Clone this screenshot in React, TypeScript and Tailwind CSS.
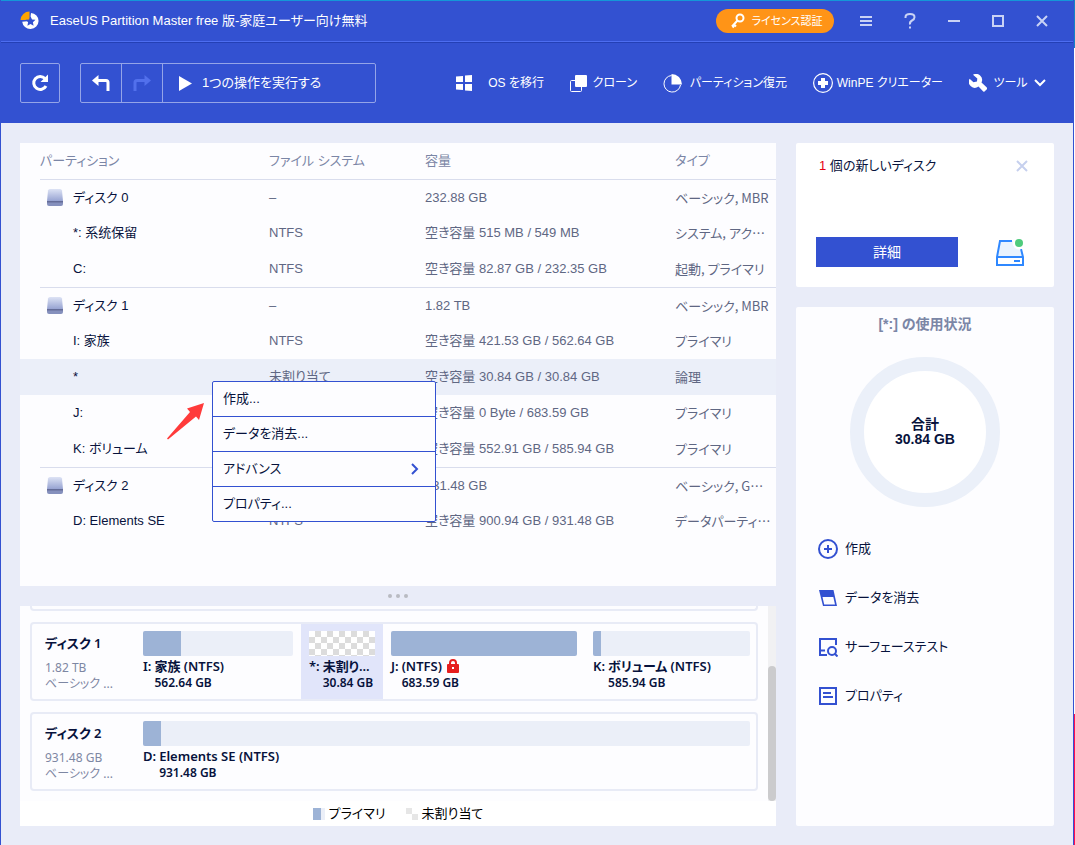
import type { ReactNode } from "react";

const rows = [
  { name: "ディスク 0", disk: true, fs: "–", size: "232.88 GB", type: "ベーシック, MBR" },
  { name: "*: 系统保留", fs: "NTFS", size: "空き容量 515 MB / 549 MB", type: "システム, アク…" },
  { name: "C:", fs: "NTFS", size: "空き容量 82.87 GB / 232.35 GB", type: "起動, プライマリ" },
  { name: "ディスク 1", disk: true, fs: "–", size: "1.82 TB", type: "ベーシック, MBR" },
  { name: "I: 家族", fs: "NTFS", size: "空き容量 421.53 GB / 562.64 GB", type: "プライマリ" },
  { name: "*", selected: true, fs: "未割り当て", size: "空き容量 30.84 GB / 30.84 GB", type: "論理" },
  { name: "J:", fs: "NTFS", size: "空き容量 0 Byte / 683.59 GB", type: "プライマリ" },
  { name: "K: ボリューム", fs: "NTFS", size: "空き容量 552.91 GB / 585.94 GB", type: "プライマリ" },
  { name: "ディスク 2", disk: true, fs: "–", size: "931.48 GB", type: "ベーシック, G…" },
  { name: "D: Elements SE", fs: "NTFS", size: "空き容量 900.94 GB / 931.48 GB", type: "データパーティ…" },
];

const menuItems = [
  { label: "作成..." },
  { label: "データを消去..." },
  { label: "アドバンス", sub: true },
  { label: "プロパティ..." },
];

const tools = [
  { label: "OS を移行", width: "w-[88px]", icon: <WindowsIcon /> },
  { label: "クローン", width: "w-[67px]", icon: <CloneIcon /> },
  { label: "パーティション復元", width: "w-[124px]", icon: <PieIcon /> },
  { label: "WinPE クリエーター", width: "w-[130px]", icon: <PlusCircleIcon /> },
];

const actions = [
  { label: "作成", icon: <CreateIcon /> },
  { label: "データを消去", icon: <WipeIcon /> },
  { label: "サーフェーステスト", icon: <SurfaceIcon /> },
  { label: "プロパティ", icon: <PropertyIcon /> },
];

function LogoIcon() {
  return (
    <svg width="20" height="20" viewBox="0 0 20 20">
      <path d="M11 2a8.200 8 0 1 1-8.800 8.800L10 10z" fill="#fff" />
      <path d="M9.500 0.500V9H0.500A9 9 0 0 1 9.500 0.500z" fill="#ffa500" />
      <path
        d="M10.500 5.200l1.500 3.200 3.500.4-2.600 2.400.7 3.500-3.100-1.700-3.100 1.700.7-3.500L5.600 8.800l3.500-.4z"
        fill="#3351d1"
      />
    </svg>
  );
}

function KeyIcon() {
  return (
    <svg width="14" height="16" viewBox="0 0 14 16" fill="none" stroke="#fff" strokeWidth="2">
      <circle cx="9" cy="5" r="3.500" />
      <path d="M6.500 7.500L1 13.500M3 11.500l2 2M1.500 13l1.500 1.500" />
    </svg>
  );
}

function WindowsIcon() {
  return (
    <svg width="16" height="16" viewBox="0 0 16 16" fill="#fff">
      <path d="M0 1.500L7 1v6H0zM9 .5L16 0v7H9zM0 9h7v6l-7-.5zM9 9h7v7l-7-.5z" />
    </svg>
  );
}

function CloneIcon() {
  return (
    <svg width="17" height="17" viewBox="0 0 17 17">
      <path d="M5 5.500H1.500a1 1 0 0 0-1 1V15.500a1 1 0 0 0 1 1H10.500a1 1 0 0 0 1-1V12" fill="none" stroke="#fff" />
      <rect x="5" y="0" width="12" height="12" rx="1" fill="#fff" />
    </svg>
  );
}

function PieIcon() {
  return (
    <svg width="19" height="19" viewBox="0 0 19 19">
      <path d="M8.500 1.500a8.300 8.300 0 1 0 9 9.500" fill="none" stroke="#fff" />
      <path d="M8.500 0A10.500 10.500 0 0 1 19 10.500H8.500z" fill="#fff" />
    </svg>
  );
}

function PlusCircleIcon() {
  return (
    <svg width="20" height="20" viewBox="0 0 20 20">
      <circle cx="10" cy="10" r="9.400" fill="none" stroke="#fff" strokeWidth="1.200" />
      <path d="M10 5v10M5 10h10" stroke="#fff" strokeWidth="4" />
    </svg>
  );
}

function WrenchIcon() {
  return (
    <svg width="18" height="18" viewBox="0 0 18 18" fill="#fff">
      <path d="M4 .8A6 6 0 0 1 12.500 8.500L17.300 13a1.800 1.800 0 0 1 0 2.800l-1 1a1.800 1.800 0 0 1-2.800 0L9.500 12.500A6 6 0 0 1 .6 4.800L4.500 8.200 8 7.500 8.300 4.500z" />
    </svg>
  );
}

function DiskIcon() {
  return (
    <svg width="16" height="17" viewBox="0 0 16 17">
      <defs>
        <linearGradient id="diskTop" x1="0" y1="0" x2="0" y2="1">
          <stop offset="0" stopColor="#dde3f5" />
          <stop offset="1" stopColor="#97a3d2" />
        </linearGradient>
      </defs>
      <path d="M1 1.500Q1.200 0 3 0H13Q14.800 0 15 1.500L16 12H0z" fill="url(#diskTop)" />
      <path d="M0 12h16v3q0 2-2 2H2q-2 0-2-2z" fill="#8590bd" />
      <path d="M0 12h16v1.500H0z" fill="#646c98" />
    </svg>
  );
}

function NewDiskIcon() {
  return (
    <svg width="30" height="30" viewBox="0 0 30 30">
      <path d="M5 4h20l3 15H2z" fill="#e9f3fe" />
      <path d="M17 4H5L2 20v8h26v-8L26 12M2 20h26" fill="none" stroke="#2f88ff" strokeWidth="2" />
      <path d="M19 24h6" stroke="#2f88ff" strokeWidth="2" />
      <circle cx="24" cy="6" r="6.500" fill="#fff" />
      <circle cx="24" cy="6" r="4" fill="#4fcb7c" />
    </svg>
  );
}

function CreateIcon() {
  return (
    <svg width="20" height="20" viewBox="0 0 20 20" fill="none" stroke="#3351d1" strokeWidth="2">
      <circle cx="10" cy="10" r="9" />
      <path d="M10 6v8M6 10h8" />
    </svg>
  );
}

function WipeIcon() {
  return (
    <svg width="20" height="20" viewBox="0 0 20 20">
      <path d="M1 2h14.500L19 18H5zM4.500 9L6.200 16.500H17L15.300 9z" fill="#3351d1" fillRule="evenodd" />
    </svg>
  );
}

function SurfaceIcon() {
  return (
    <svg width="20" height="20" viewBox="0 0 20 20" fill="none" stroke="#3351d1" strokeWidth="2">
      <path d="M18 8V2H2v16h7M2 13.500h5" />
      <circle cx="14" cy="14" r="4" />
      <path d="M16.500 16.500l3 3" />
    </svg>
  );
}

function PropertyIcon() {
  return (
    <svg width="20" height="20" viewBox="0 0 20 20" fill="none" stroke="#3351d1" strokeWidth="2">
      <path d="M2 2h16v16H2zM5 7h8M5 11h10" />
    </svg>
  );
}

function LockIcon() {
  return (
    <svg width="12" height="14" viewBox="0 0 12 14">
      <path d="M3 7V4a3 3 0 0 1 6 0v3" fill="none" stroke="#e61e1e" strokeWidth="2" />
      <rect y="5" width="12" height="9" rx="1" fill="#e61e1e" />
      <rect x="5" y="8" width="2" height="2" fill="#fff" />
    </svg>
  );
}

function WindowButton({ label, children }: { label: string; children: ReactNode }) {
  return (
    <button aria-label={label} className="flex h-10 w-11 shrink-0 items-center justify-center">
      <svg width="14" height="16" viewBox="0 0 14 16" fill="none" stroke="#c9d2f5" strokeWidth="2">
        {children}
      </svg>
    </button>
  );
}

function TitleBar() {
  return (
    <div className="flex h-10 items-center pr-[9px] pl-[19px] text-white">
      <LogoIcon />
      <h1 className="ml-[10px] grow truncate text-[13px]">
        EaseUS Partition Master free 版-家庭ユーザー向け無料
      </h1>
      <button className="mr-[10px] flex h-6 w-[118px] shrink-0 items-center justify-center gap-[6px] rounded-full bg-[#ff9417] pl-1 text-[11px] whitespace-nowrap">
        <KeyIcon />
        ライセンス認証
      </button>
      <WindowButton label="メニュー">
        <path d="M1 4h12M1 8h12M1 12h12" />
      </WindowButton>
      <WindowButton label="ヘルプ">
        <path d="M2.500 5V4Q2.500 1 7 1t4.500 3.200Q11.500 6.200 9 7.500T7 11.500M7 13.500v2" />
      </WindowButton>
      <WindowButton label="最小化">
        <path d="M1 8h12" />
      </WindowButton>
      <WindowButton label="最大化">
        <path d="M2 3h10v10H2z" />
      </WindowButton>
      <WindowButton label="閉じる">
        <path d="M2 3l10 10M12 3L2 13" />
      </WindowButton>
    </div>
  );
}

function Toolbar() {
  return (
    <div className="flex h-20 items-center pr-[27px] pl-[19px] text-[13px] text-white">
      <button aria-label="更新" className="flex size-10 items-center justify-center rounded-xs border border-[#94a4e8]">
        <svg width="18" height="18" viewBox="0 0 18 18">
          <path d="M14 4.500A6.500 6.500 0 1 0 15 12" fill="none" stroke="#fff" strokeWidth="3" />
          <path d="M17 .5v7.500H9.500z" fill="#fff" />
        </svg>
      </button>
      <div className="ml-5 flex h-10 w-[296px] divide-x divide-[#94a4e8] rounded-xs border border-[#94a4e8]">
        <button aria-label="元に戻す" className="flex w-[41px] items-center justify-center">
          <svg width="18" height="16" viewBox="0 0 18 16">
            <path d="M5 5.500h9q2 0 2 2V16" fill="none" stroke="#fff" strokeWidth="3" />
            <path d="M0 5.500L6.500 0v11z" fill="#fff" />
          </svg>
        </button>
        <button aria-label="やり直し" className="flex w-[41px] items-center justify-center" disabled>
          <svg width="18" height="16" viewBox="0 0 18 16">
            <path d="M13 5.500H4q-2 0-2 2V16" fill="none" stroke="#5270ec" strokeWidth="3" />
            <path d="M18 5.500L11.500 0v11z" fill="#5270ec" />
          </svg>
        </button>
        <button className="flex grow items-center gap-[10px] pl-4">
          <svg width="13" height="15" viewBox="0 0 13 15">
            <path d="M0 0l13 7.500L0 15z" fill="#fff" />
          </svg>
          1つの操作を実行する
        </button>
      </div>
      <nav className="ml-auto flex gap-[26px] text-[12px]">
        {tools.map((tool) => (
          <button
            key={tool.label}
            className={`flex items-center justify-between whitespace-nowrap [&>svg]:shrink-0 ${tool.width}`}
          >
            {tool.icon}
            {tool.label}
          </button>
        ))}
        <button className="flex w-[77px] items-center justify-between whitespace-nowrap [&>svg]:shrink-0">
          <WrenchIcon />
          ツール
          <svg width="12" height="8" viewBox="0 0 12 8" fill="none" stroke="#fff" strokeWidth="2">
            <path d="M1 1l5 5 5-5" />
          </svg>
        </button>
      </nav>
    </div>
  );
}

function PartitionTable() {
  return (
    <section className="relative grow bg-[#fdfdff]">
      <table className="w-full table-fixed border-separate border-spacing-0 text-left text-[13px] text-[#5f6783]">
        <colgroup>
          <col className="w-5" />
          <col className="w-[229px]" />
          <col className="w-[156px]" />
          <col className="w-[250px]" />
          <col />
        </colgroup>
        <thead>
          <tr className="h-9 text-[#7b86a6]">
            <td />
            <th className="font-normal">パーティション</th>
            <th className="font-normal">ファイル システム</th>
            <th className="font-normal">容量</th>
            <th className="font-normal">タイプ</th>
          </tr>
        </thead>
        <tbody>
          {rows.map((row) => {
            const line = row.disk ? "border-t border-[#d9dded]" : "";
            return (
              <tr key={row.name} className={`h-9 ${row.selected ? "bg-[#ebeff9]" : ""}`}>
                <td />
                <td className={`${line} text-[#07123c]`}>
                  <div className="flex items-center">
                    <span className="flex w-[33px] pl-[7px]">{row.disk && <DiskIcon />}</span>
                    {row.name}
                  </div>
                </td>
                <td className={line}>{row.fs}</td>
                <td className={`${line} whitespace-nowrap`}>{row.size}</td>
                <td className={`${line} font-['Noto_Sans_CJK_JP',sans-serif] whitespace-nowrap`}>{row.type}</td>
              </tr>
            );
          })}
        </tbody>
      </table>

      <svg className="absolute top-[259px] left-[146px]" width="40" height="40" viewBox="0 0 40 40">
        <path d="M38 1L33 18 30 14.500 2 37.500 1 36.500 24 10 21 6.500z" fill="#ff3b3b" />
      </svg>

      <ul className="absolute top-[238px] left-48 w-[224px] divide-y divide-[#3351d1] rounded-xs border border-[#3351d1] bg-[#fdfdff] text-[13px] text-[#07123c]">
        {menuItems.map((item) => (
          <li key={item.label}>
            <button className="flex h-[34px] w-full items-center justify-between pr-4 pl-[10px]">
              {item.label}
              {item.sub && (
                <svg width="8" height="12" viewBox="0 0 8 12" fill="none" stroke="#3351d1" strokeWidth="2">
                  <path d="M1 1l5 5-5 5" />
                </svg>
              )}
            </button>
          </li>
        ))}
      </ul>
    </section>
  );
}

function Partition({
  letter,
  name,
  size,
  used,
  locked,
  className,
}: {
  letter: string;
  name: string;
  size: string;
  used?: number;
  locked?: boolean;
  className: string;
}) {
  return (
    <div className={`min-w-0 px-2 pt-[7px] last:pr-[6px] ${className}`}>
      {used === undefined ? (
        <div className="h-[25px] bg-[repeating-conic-gradient(#dcdcdc_0_25%,#ffffff_0_50%)] bg-[length:12px_12px]" />
      ) : (
        <div className="h-[25px] overflow-hidden rounded-xs bg-[#ebeff8]">
          <div className="h-full bg-[#9db3d6]" style={{ width: `${used}%` }} />
        </div>
      )}
      <div className="flex gap-[3px] font-semibold text-[#07123c]">
        <span className="text-[13px] leading-5">{letter}:</span>
        <div className="min-w-0">
          <p className="flex items-center gap-[5px] text-[13px] leading-5 whitespace-nowrap">
            {name}
            {locked && <LockIcon />}
          </p>
          <p className="text-[12px] leading-[14px] whitespace-nowrap">{size}</p>
        </div>
      </div>
    </div>
  );
}

function DiskCard({ name, size, children }: { name: string; size: string; children: ReactNode }) {
  return (
    <div className="flex h-[79px] rounded-sm border-2 border-[#e8ebf6] font-['Noto_Sans','Noto_Sans_CJK_JP',sans-serif]">
      <div className="w-[103px] shrink-0 pt-[9px] pl-[13px] text-[12px] leading-4 text-[#7d87a3]">
        <h3 className="mb-[7px] text-[13px] leading-5 font-semibold text-[#07123c]">{name}</h3>
        <p>{size}</p>
        <p>ベーシック ...</p>
      </div>
      {children}
    </div>
  );
}

function DiskMap() {
  return (
    <section className="bg-[#fdfdff]">
      <div className="flex">
        <div className="flex h-[195px] grow flex-col gap-[11px] overflow-hidden px-[10px]">
          <div className="h-[5px] shrink-0 rounded-b-sm border-x-2 border-b-2 border-[#e8ebf6]" />
          <DiskCard name="ディスク 1" size="1.82 TB">
            <Partition className="flex-[150_1_0px]" letter="I" name="家族 (NTFS)" size="562.64 GB" used={25} />
            <Partition className="flex-[66_1_0px] bg-[#e1e5fa]" letter="*" name="未割り..." size="30.84 GB" />
            <Partition className="flex-[186_1_0px]" letter="J" name="(NTFS)" size="683.59 GB" used={100} locked />
            <Partition className="flex-[157_1_0px]" letter="K" name="ボリューム (NTFS)" size="585.94 GB" used={5} />
          </DiskCard>
          <DiskCard name="ディスク 2" size="931.48 GB">
            <Partition className="grow" letter="D" name="Elements SE (NTFS)" size="931.48 GB" used={3} />
          </DiskCard>
        </div>
        <div className="flex w-2 flex-col justify-end bg-[#f1f1f3]">
          <div className="h-[135px] rounded-full bg-[#cbcbcd]" />
        </div>
      </div>
      <div className="flex h-[25px] items-center justify-center gap-5 bg-white text-[13px] text-black">
        <span className="flex items-center gap-1">
          <span className="flex size-3 bg-[#ebeff8]">
            <span className="w-2 bg-[#9db3d6]" />
          </span>
          プライマリ
        </span>
        <span className="flex items-center gap-1">
          <span className="size-3 bg-[repeating-conic-gradient(#ffffff_0_25%,#e6e6e6_0_50%)]" />
          未割り当て
        </span>
      </div>
    </section>
  );
}

function NewDiskNotice() {
  return (
    <section className="flex h-36 flex-col justify-between rounded-xs bg-white px-5 pt-[13px] pb-5">
      <div className="flex items-center justify-between pr-[5px] pl-[3px] text-[13px] text-[#07123c]">
        <p>
          <span className="text-[#e60012]">1</span> 個の新しいディスク
        </p>
        <button aria-label="通知を閉じる">
          <svg width="14" height="14" viewBox="0 0 14 14" fill="none" stroke="#c6d0ee" strokeWidth="2">
            <path d="M2 2l10 10M12 2L2 12" />
          </svg>
        </button>
      </div>
      <div className="flex items-end justify-between pr-[9px]">
        <button className="h-[30px] w-[142px] bg-[#3351d1] text-[14px] text-white">詳細</button>
        <NewDiskIcon />
      </div>
    </section>
  );
}

function UsagePanel() {
  return (
    <section className="grow rounded-xs bg-[#fdfdff] pt-[7px] text-[14px]">
      <h2 className="text-center leading-5 font-bold text-[#7b86a6]">[*:] の使用状況</h2>
      <div className="mx-auto mt-[23px] flex size-[150px] flex-col items-center justify-center rounded-full border-14 border-[#ebf0f9] bg-white leading-[15px] font-bold text-[#07123c]">
        <span>合計</span>
        <span>30.84 GB</span>
      </div>
      <ul className="mt-[17px] pl-[22px] text-[13px] text-[#07123c]">
        {actions.map((action) => (
          <li key={action.label}>
            <button className="flex h-[49px] items-center gap-[7px]">
              {action.icon}
              {action.label}
            </button>
          </li>
        ))}
      </ul>
    </section>
  );
}

export default function App() {
  return (
    <div
      lang="ja"
      className="flex min-h-screen font-['Liberation_Sans','Noto_Sans_CJK_JP',sans-serif] [font-feature-settings:'palt']"
    >
      <div className="flex min-w-0 grow flex-col border-x border-[#3351d1] bg-[#e9ecf8]">
        <header className="border-t border-[#1497d8] bg-[#3351d1]">
          <TitleBar />
          <div className="h-[2px] border-t border-[#4d6df0] bg-[#2440b5]" />
          <Toolbar />
        </header>
        <main className="flex grow gap-5 px-[19px] pt-5 pb-[19px]">
          <div className="flex min-w-0 grow flex-col">
            <PartitionTable />
            <div className="flex h-5 items-center justify-center gap-1">
              <span className="size-1 rounded-full bg-[#b9bbc2]" />
              <span className="size-1 rounded-full bg-[#b9bbc2]" />
              <span className="size-1 rounded-full bg-[#b9bbc2]" />
            </div>
            <DiskMap />
          </div>
          <aside className="flex w-[258px] shrink-0 flex-col gap-5">
            <NewDiskNotice />
            <UsagePanel />
          </aside>
        </main>
      </div>
      {/* sliver of the desktop behind the window */}
      <div className="flex w-px shrink-0 flex-col">
        <div className="h-12 bg-[#1484c4]" />
        <div className="grow bg-white" />
        <div className="h-[131px] bg-[#ff0f50]" />
      </div>
    </div>
  );
}
